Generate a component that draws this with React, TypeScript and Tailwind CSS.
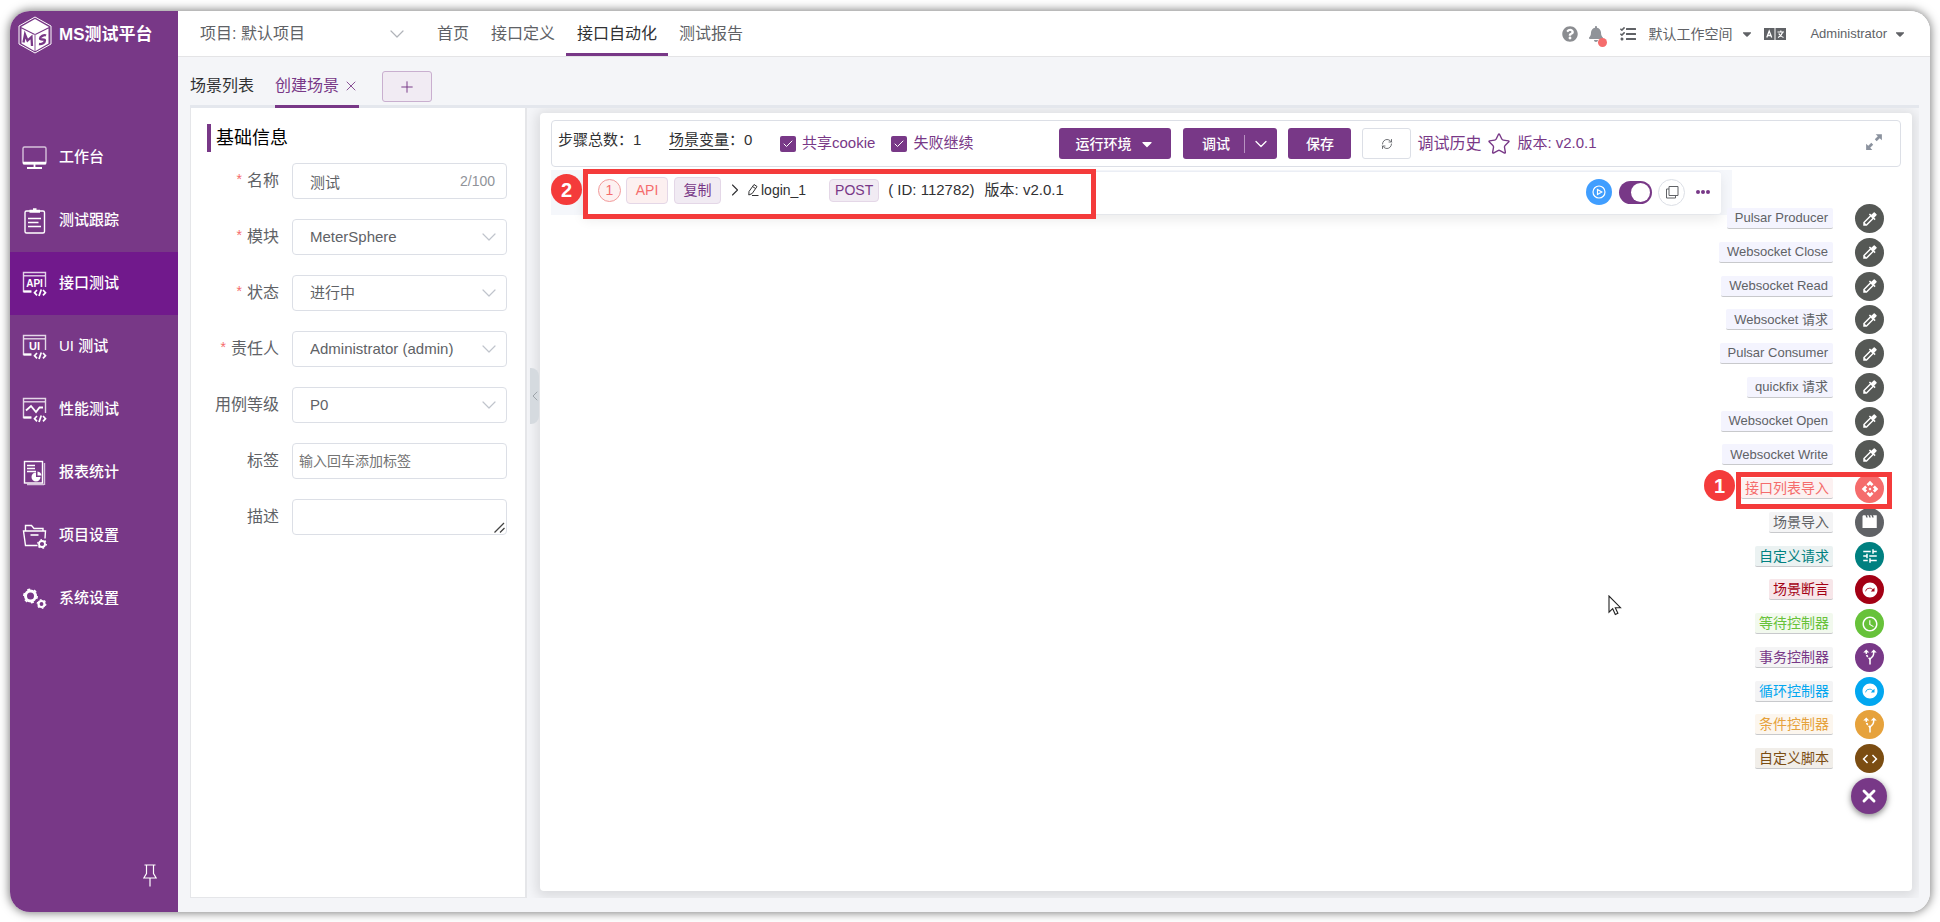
import * as React from "react"
import { clsx } from "clsx"
import { FaBell, FaCaretDown, FaQuestionCircle, FaTasks } from "react-icons/fa"
import {
  MdAccessTime,
  MdAltRoute,
  MdApi,
  MdCode,
  MdColorize,
  MdNextPlan,
  MdTune,
} from "react-icons/md"
import {
  Check,
  ChevronDown,
  ChevronLeft,
  ChevronRight,
  Plus,
  RefreshCw,
  Star,
  X,
} from "lucide-react"

function CodeMark() {
  return (
    <g strokeWidth="1.7">
      <path d="M15 19l-2.500 2.700 2.500 2.700" />
      <path d="M21 19l2.500 2.700-2.500 2.700" />
      <path d="M19.300 18.500l-2.300 6.500" />
    </g>
  )
}

function WindowFrame({ children }: { children: React.ReactNode }) {
  return (
    <>
      <path d="M9 20.500H1.500V1.500h22V16" strokeOpacity="0.8" />
      <path d="M1.500 20.500H9.500" strokeWidth="2.200" />
      <path d="M2 4.800h21" strokeOpacity="0.8" />
      {children}
      <CodeMark />
    </>
  )
}

function MenuSvg({ children }: { children: React.ReactNode }) {
  return (
    <svg
      viewBox="0 0 25 26"
      className="h-[26px] w-[25px] shrink-0"
      fill="none"
      stroke="currentColor"
      strokeWidth="1.4"
    >
      {children}
    </svg>
  )
}

const menus = [
  {
    label: "工作台",
    icon: (
      <MenuSvg>
        <rect x="1" y="2" width="23" height="17" rx="1.5" strokeOpacity="0.7" />
        <path d="M1 18h23" strokeWidth="2.6" />
        <path d="M12.5 19v3M5 23h15" strokeWidth="1.8" />
      </MenuSvg>
    ),
  },
  {
    label: "测试跟踪",
    icon: (
      <MenuSvg>
        <rect x="3" y="3" width="19.5" height="22" rx="1.5" />
        <path d="M7.5 3.2h10.500" strokeWidth="3" />
        <path d="M11 1.2h3.500" strokeWidth="2" />
        <path d="M6 10.5h13M6 14.5h10.500M6 18.500h13" />
      </MenuSvg>
    ),
  },
  {
    label: "接口测试",
    active: true,
    icon: (
      <MenuSvg>
        <WindowFrame>
          <text
            x="12.5"
            y="15.5"
            textAnchor="middle"
            fill="currentColor"
            stroke="none"
            fontSize="10"
            fontWeight="700"
          >
            API
          </text>
        </WindowFrame>
      </MenuSvg>
    ),
  },
  {
    label: "UI 测试",
    icon: (
      <MenuSvg>
        <WindowFrame>
          <text
            x="12.5"
            y="16"
            textAnchor="middle"
            fill="currentColor"
            stroke="none"
            fontSize="11"
            fontWeight="700"
          >
            UI
          </text>
        </WindowFrame>
      </MenuSvg>
    ),
  },
  {
    label: "性能测试",
    icon: (
      <MenuSvg>
        <WindowFrame>
          <path d="M4 13.5l5-4.500 5 6 3.500-4.500h3.500" strokeWidth="1.8" />
        </WindowFrame>
      </MenuSvg>
    ),
  },
  {
    label: "报表统计",
    icon: (
      <MenuSvg>
        <rect x="2.500" y="1.5" width="18" height="21.500" />
        <path d="M22.500 3v22M5 24.500h17" strokeOpacity="0.7" />
        <path d="M5 5.500h8M5 8.500h8M5 11.500h9" />
        <path
          d="M14 12.500v4.500h4.500a4.500 4.500 0 1 1-4.500-4.500z"
          fill="currentColor"
          stroke="none"
        />
        <path
          d="M15.500 11.500a4.500 4.500 0 0 1 4 4h-4z"
          fill="currentColor"
          stroke="none"
        />
      </MenuSvg>
    ),
  },
  {
    label: "项目设置",
    icon: (
      <MenuSvg>
        <path d="M3.500 8V2.500h6l2.500 3h9V8" />
        <path d="M15.500 22.500H3.500L1.500 8h22l-.5 7.500" />
        <path d="M8.500 12h8" strokeWidth="1.600" />
        <circle cx="20" cy="21" r="3" strokeWidth="1.800" />
        <circle
          cx="20"
          cy="21"
          r="4.200"
          strokeDasharray="1.600 2.800"
          strokeWidth="1.500"
        />
      </MenuSvg>
    ),
  },
  {
    label: "系统设置",
    icon: (
      <MenuSvg>
        <circle cx="8.500" cy="10" r="5" strokeWidth="3" />
        <circle
          cx="8.500"
          cy="10"
          r="6.700"
          strokeDasharray="3 4"
          strokeWidth="1.500"
        />
        <circle cx="19.500" cy="18" r="3" strokeWidth="2.200" />
        <circle
          cx="19.500"
          cy="18"
          r="4.300"
          strokeDasharray="1.800 2.700"
          strokeWidth="1.200"
        />
      </MenuSvg>
    ),
  },
]

const navLinks = ["首页", "接口定义", "接口自动化", "测试报告"]

function ClapIcon({ className }: { className?: string }) {
  return (
    <svg viewBox="0 0 24 24" className={className} fill="currentColor">
      <path d="M3 3h3l1 3h2L8 3h2l1 3h2l-1-3h2l1 3h2l-1-3h5v17H2V4z" />
    </svg>
  )
}

type Step = {
  label: string
  icon: React.ComponentType<{ className?: string }>
  circle: string
  tag: string
}

const steps: Step[] = [
  ...[
    "Pulsar Producer",
    "Websocket Close",
    "Websocket Read",
    "Websocket 请求",
    "Pulsar Consumer",
    "quickfix 请求",
    "Websocket Open",
    "Websocket Write",
  ].map((label) => ({
    label,
    icon: MdColorize,
    circle: "bg-[#555855]",
    tag: "bg-[#f4f4fe] pr-[5px] pl-2 text-[13px] text-[#606266]",
  })),
  {
    label: "接口列表导入",
    icon: MdApi,
    circle: "bg-[#f56c6c]",
    tag: "bg-[#fcf1f1] px-1 text-sm text-[#f56c6c]",
  },
  {
    label: "场景导入",
    icon: ClapIcon,
    circle: "bg-[#606266]",
    tag: "bg-[#f4f4f5] px-1 text-sm text-[#606266]",
  },
  {
    label: "自定义请求",
    icon: MdTune,
    circle: "bg-[#008080]",
    tag: "bg-[#ebf2f2] px-1 text-sm text-[#008080]",
  },
  {
    label: "场景断言",
    icon: MdNextPlan,
    circle: "bg-[#a30014]",
    tag: "bg-[#f7e6e9] px-1 text-sm text-[#a30014]",
  },
  {
    label: "等待控制器",
    icon: MdAccessTime,
    circle: "bg-[#67c23a]",
    tag: "bg-[#f2f9ee] px-1 text-sm text-[#67c23a]",
  },
  {
    label: "事务控制器",
    icon: MdAltRoute,
    circle: "bg-[#783887]",
    tag: "bg-[#f4f4f5] px-1 text-sm text-[#783887]",
  },
  {
    label: "循环控制器",
    icon: MdNextPlan,
    circle: "bg-[#02a7f0]",
    tag: "bg-[#f4f4f5] px-1 text-sm text-[#02a7f0]",
  },
  {
    label: "条件控制器",
    icon: MdAltRoute,
    circle: "bg-[#e6a23c]",
    tag: "bg-[#fcf6ee] px-1 text-sm text-[#e6a23c]",
  },
  {
    label: "自定义脚本",
    icon: MdCode,
    circle: "bg-[#7b4d12]",
    tag: "bg-[#f1eee9] px-1 text-sm text-[#7b4d12]",
  },
]

function Logo() {
  return (
    <svg viewBox="0 0 34 38" className="h-[38px] w-[34px] shrink-0">
      <path
        d="M17 1L33 10v18L17 37 1 28V10z"
        fill="none"
        stroke="#fff"
        strokeWidth="1"
      />
      <path d="M17 3L31 11 17 18 3 11z" fill="#fff" />
      <path d="M3.500 12.500L16.500 19v16L3.500 27.500z" fill="#fff" />
      <path d="M30.500 12.500L17.500 19v16l13-7.500z" fill="#fff" />
      <path d="M17 18.500v16.500" stroke="#c8aed0" strokeWidth="1.500" />
      <path
        d="M5.500 26.500l1.500-8 2.500 6 4-3.500.5 9"
        fill="none"
        stroke="#783887"
        strokeWidth="2.300"
      />
      <path
        d="M28 19.500c-2-1-6 1-6 3s5 0 5 2-3 4-6 3.500"
        fill="none"
        stroke="#783887"
        strokeWidth="2.300"
      />
    </svg>
  )
}

function Sidebar() {
  return (
    <aside className="flex w-[168px] shrink-0 flex-col bg-[#783887] text-white">
      <div className="flex items-center gap-[7px] pt-[5px] pl-2">
        <Logo />
        <span className="text-[17px] font-bold">MS测试平台</span>
      </div>
      <nav className="mt-[72px] flex flex-col">
        {menus.map((menu) => (
          <a
            key={menu.label}
            href="#"
            className={clsx(
              "flex h-[63px] items-center gap-3 pl-3 text-[15px] font-medium",
              menu.active && "bg-[#71198c]"
            )}
          >
            {menu.icon}
            {menu.label}
          </a>
        ))}
      </nav>
      <button
        aria-label="固定菜单"
        className="mt-auto mr-[21px] mb-[25px] self-end"
      >
        <svg
          viewBox="0 0 14 23"
          className="h-[23px] w-[14px]"
          fill="none"
          stroke="currentColor"
          strokeWidth="1.2"
        >
          <path d="M1.500 1h11M3.500 1v8.500L.8 14h12.400l-2.700-4.500V1M7 14v8.500" />
        </svg>
      </button>
    </aside>
  )
}

function Header() {
  return (
    <header className="flex h-[46px] shrink-0 items-center justify-between border-b border-[#e4e4e6] bg-white">
      <div className="flex items-center self-stretch">
        <button className="ml-[22px] flex w-[209px] items-center justify-between text-base text-[#606266]">
          项目: 默认项目
          <ChevronDown className="size-6 text-[#b0b3b9]" strokeWidth={1.2} />
        </button>
        <nav className="ml-[17px] flex self-stretch text-base text-[#606266]">
          {navLinks.map((link) => (
            <a
              key={link}
              href="#"
              className={clsx(
                "flex items-center border-b-3 px-[11px] pt-1",
                link === "接口自动化"
                  ? "border-[#783887] text-[#303133]"
                  : "border-transparent"
              )}
            >
              {link}
            </a>
          ))}
        </nav>
      </div>
      <div className="flex items-center pr-[23px] text-[#606266]">
        <button aria-label="帮助" className="text-[#8b8d91]">
          <FaQuestionCircle className="size-4" />
        </button>
        <button aria-label="通知" className="relative ml-2.5 text-[#909399]">
          <FaBell className="size-4" />
          <span className="absolute top-3 left-2.5 size-[9px] rounded-full bg-[#f56c6c]" />
        </button>
        <button className="ml-4 flex items-center text-sm">
          <FaTasks className="mr-3 size-4" />
          默认工作空间
          <FaCaretDown className="ml-2 size-3.5" />
        </button>
        <button aria-label="语言" className="ml-2.5">
          <svg viewBox="0 0 22 12" className="h-3 w-[22px]">
            <rect width="10.5" height="12" fill="#606266" />
            <rect x="11.5" width="10.5" height="12" fill="#606266" />
            <path
              d="M2.800 9.500L5.200 3l2.500 6.500M3.700 7.500h3"
              fill="none"
              stroke="#fff"
              strokeWidth="1.3"
            />
            <path
              d="M13.500 4h6.500M16.800 2.500V4M18.500 4.500c-.8 2.500-2.300 4-4.500 5M14.800 5.500c1 2 2.500 3.300 4.700 4"
              fill="none"
              stroke="#fff"
              strokeWidth="1.2"
            />
          </svg>
        </button>
        <button className="ml-6 flex items-center text-[13px]">
          Administrator
          <FaCaretDown className="ml-1.5 size-3.5" />
        </button>
      </div>
    </header>
  )
}

function Tabs() {
  return (
    <div className="flex h-[51px] shrink-0 border-b-3 border-[#e4e7ed] text-base text-[#303133]">
      <button className="mr-[21px] flex items-center pt-2.5">场景列表</button>
      <div className="-mb-[3px] flex items-center border-b-3 border-[#783887] pt-2.5 text-[#783887]">
        <button>创建场景</button>
        <button aria-label="关闭标签" className="ml-1">
          <X className="size-4" strokeWidth={1.3} />
        </button>
      </div>
      <button
        aria-label="新增标签"
        className="mt-3.5 ml-[23px] flex h-[31px] w-[50px] items-center justify-center rounded-[3px] border border-[#c9afcf] bg-[#f1ebf3] text-[#783887]"
      >
        <Plus className="size-[18px]" strokeWidth={1.3} />
      </button>
    </div>
  )
}

const fieldClass =
  "h-9 w-full rounded border border-[#dcdfe6] bg-white pl-[17px] text-[15px] text-[#606266] outline-none"

function Field(props: {
  id: string
  label: string
  required?: boolean
  children: React.ReactNode
}) {
  return (
    <div className="flex items-center gap-[13px]">
      <label
        htmlFor={props.id}
        className="flex w-[72px] shrink-0 justify-end gap-[5px] text-base whitespace-nowrap text-[#606266]"
      >
        {props.required && (
          <span className="text-sm leading-5 text-[#f56c6c]">*</span>
        )}
        {props.label}
      </label>
      <div className="relative flex flex-1">{props.children}</div>
    </div>
  )
}

function SelectBox({ id, value }: { id: string; value: string }) {
  return (
    <>
      <select id={id} className={clsx(fieldClass, "appearance-none")}>
        <option>{value}</option>
      </select>
      <ChevronDown
        className="pointer-events-none absolute top-1.5 right-1.5 size-6 text-[#c0c4cc]"
        strokeWidth={1.2}
      />
    </>
  )
}

function BasicInfo() {
  return (
    <section className="w-[337px] shrink-0 border-x border-r-2 border-b border-[#e5e6e9] bg-white pt-4 pr-[18px] pl-4">
      <h2 className="flex h-7 items-center border-l-4 border-[#783887] pl-[5px] text-lg text-black">
        基础信息
      </h2>
      <form className="mt-[11px] flex flex-col gap-5">
        <Field id="name" label="名称" required>
          <input
            id="name"
            defaultValue="测试"
            className={clsx(fieldClass, "pr-16")}
          />
          <span className="absolute top-[7px] right-3 text-sm leading-[22px] text-[#909399]">
            2/100
          </span>
        </Field>
        <Field id="module" label="模块" required>
          <SelectBox id="module" value="MeterSphere" />
        </Field>
        <Field id="status" label="状态" required>
          <SelectBox id="status" value="进行中" />
        </Field>
        <Field id="owner" label="责任人" required>
          <SelectBox id="owner" value="Administrator (admin)" />
        </Field>
        <Field id="level" label="用例等级">
          <SelectBox id="level" value="P0" />
        </Field>
        <Field id="tags" label="标签">
          <input
            id="tags"
            placeholder="输入回车添加标签"
            className="h-9 w-full rounded border border-[#dcdfe6] pl-1.5 text-sm outline-none placeholder:text-[#757575]"
          />
        </Field>
        <Field id="desc" label="描述">
          <textarea
            id="desc"
            rows={1}
            className="h-9 w-full resize-none rounded border border-[#dcdfe6] px-4 py-1.5 text-sm outline-none"
          />
          <svg
            viewBox="0 0 11 11"
            className="pointer-events-none absolute right-0.5 bottom-0.5 size-[11px]"
            stroke="#444"
            strokeWidth="1.3"
          >
            <path d="M.5 10.500L10 1M6 10.500L10.500 6" />
          </svg>
        </Field>
      </form>
    </section>
  )
}

function CheckItem({ id, label }: { id: string; label: string }) {
  return (
    <div className="flex items-center gap-1.5">
      <span className="relative flex size-4">
        <input
          id={id}
          type="checkbox"
          defaultChecked
          className="size-4 appearance-none rounded-[2px] bg-[#783887]"
        />
        <Check
          className="pointer-events-none absolute top-0.5 left-0.5 size-3 text-white"
          strokeWidth={2}
        />
      </span>
      <label htmlFor={id} className="text-[15px] text-[#783887]">
        {label}
      </label>
    </div>
  )
}

const primaryButton =
  "flex h-[31px] items-center rounded-[3px] bg-[#783887] text-sm font-medium text-white"

function Toolbar() {
  return (
    <div className="flex h-[47px] items-center rounded border border-[#dcdfe6] pr-[17px] pl-1.5 text-[15px] whitespace-nowrap text-[#303133]">
      <span className="w-[111px] pb-1.5">步骤总数：1</span>
      <span className="w-[111px] pb-1.5">
        <a href="#" className="border-b border-[#303133] pb-px">
          场景变量
        </a>
        ：0
      </span>
      <div className="flex items-center gap-4">
        <CheckItem id="cookie" label="共享cookie" />
        <CheckItem id="continue" label="失败继续" />
      </div>
      <button
        className={clsx(primaryButton, "ml-[86px] w-[112px] justify-center")}
      >
        运行环境
        <FaCaretDown className="ml-2 size-4" />
      </button>
      <div className={clsx(primaryButton, "ml-3 w-[94px]")}>
        <button className="flex-1 pl-1">调试</button>
        <button
          aria-label="更多调试"
          className="flex h-[18px] w-[33px] items-center justify-center border-l border-[#b892c1]"
        >
          <ChevronDown className="size-5" strokeWidth={1.5} />
        </button>
      </div>
      <button
        className={clsx(primaryButton, "ml-[11px] w-[63px] justify-center")}
      >
        保存
      </button>
      <button
        aria-label="刷新"
        className="ml-[11px] flex h-[31px] w-[49px] items-center justify-center rounded-[3px] border border-[#dcdfe6] text-[#606266]"
      >
        <RefreshCw className="size-3" strokeWidth={1.8} />
      </button>
      <a href="#" className="ml-1.5 text-base text-[#783887]">
        调试历史
      </a>
      <button aria-label="收藏" className="ml-1.5 text-[#783887]">
        <Star className="size-6" strokeWidth={1.4} />
      </button>
      <a href="#" className="ml-1.5 text-[15px] text-[#783887]">
        版本: v2.0.1
      </a>
      <button aria-label="全屏" className="ml-auto text-[#8b929e]">
        <svg viewBox="0 0 16 16" className="mb-1 size-[18px]" fill="currentColor">
          <path d="M9.500 1H15v5.500l-1.900-1.900-2.700 2.700-1.700-1.700 2.700-2.700zM6.500 15H1V9.500l1.900 1.900 2.700-2.700 1.700 1.700-2.700 2.700z" />
        </svg>
      </button>
    </div>
  )
}

function Marker({ value, className }: { value: string; className: string }) {
  return (
    <span
      className={clsx(
        "absolute z-20 flex size-[31px] items-center justify-center rounded-full bg-[#f43b3b] text-xl font-bold text-white",
        className
      )}
    >
      {value}
    </span>
  )
}

function StepRow() {
  return (
    <div className="relative mt-[3px] mr-[169px] h-[45px] bg-[#f5f7fb] pt-px pr-[11px] pl-8">
      <div className="flex h-[43px] items-center rounded-[3px] border-t border-[#ebeef5] bg-white pb-1.5 pl-[15px] text-sm whitespace-nowrap text-[#303133] shadow-[0_6px_12px_rgba(0,0,0,0.08)]">
        <span className="flex size-[23px] items-center justify-center rounded-full border border-[#f29a9a] bg-[#fdf1f1] text-[#f56c6c]">
          1
        </span>
        <span className="ml-[5px] flex h-[27px] w-[42px] items-center justify-center rounded border border-[#e4d7e7] bg-[#fcf0f0] text-[#f56c6c]">
          API
        </span>
        <button className="ml-1.5 flex h-[27px] w-[47px] items-center justify-center rounded border border-[#e4d7e7] bg-[#f1ebf3] text-[#783887]">
          复制
        </button>
        <ChevronRight className="ml-1 size-5" strokeWidth={1.3} />
        <svg
          viewBox="0 0 12 14"
          className="ml-0.5 h-3.5 w-3"
          fill="none"
          stroke="currentColor"
          strokeWidth="1"
        >
          <path d="M2 8.500L7 1.500l3 2L5.200 10.500 1.800 12zM5.500 3.500l3 2M5 12.500h6.500" />
        </svg>
        <span className="ml-0.5">login_1</span>
        <span className="ml-[23px] flex h-[23px] w-[50px] items-center justify-center rounded border border-[#e4d7e7] bg-[#f1ebf3] text-[#783887]">
          POST
        </span>
        <span className="ml-[9px] text-[15px]">( ID: 112782)</span>
        <span className="ml-2.5 text-[15px]">版本: v2.0.1</span>
        <div className="mt-1 mr-[11px] ml-auto flex items-center">
          <button
            aria-label="执行"
            className="flex size-[26px] items-center justify-center rounded-full bg-[#409eff] text-white"
          >
            <svg
              viewBox="0 0 14 14"
              className="size-3.5"
              fill="none"
              stroke="currentColor"
              strokeWidth="1.2"
            >
              <circle cx="7" cy="7" r="6" />
              <path d="M5.500 4.500v5L9.800 7z" />
            </svg>
          </button>
          <span className="relative ml-[7px] flex">
            <input
              type="checkbox"
              role="switch"
              aria-label="启用步骤"
              defaultChecked
              className="h-[23px] w-[33px] appearance-none rounded-full bg-[#783887]"
            />
            <span className="pointer-events-none absolute top-0.5 right-0.5 size-[19px] rounded-full bg-white" />
          </span>
          <button
            aria-label="复制步骤"
            className="ml-1.5 flex size-[27px] items-center justify-center rounded-full border border-[#dcdfe6] text-[#606266]"
          >
            <svg
              viewBox="0 0 14 14"
              className="size-3.5"
              fill="none"
              stroke="currentColor"
              strokeWidth="1"
            >
              <path d="M4 1.500h9v9H4zM4 4H1.500v9h9v-2.500" />
            </svg>
          </button>
          <button
            aria-label="更多"
            className="ml-[11px] flex h-4 items-center gap-px"
          >
            <span className="size-[4px] rounded-full bg-[#783887]" />
            <span className="size-[4px] rounded-full bg-[#783887]" />
            <span className="size-[4px] rounded-full bg-[#783887]" />
          </button>
        </div>
      </div>
      <Marker value="2" className="top-1 left-0" />
      <span className="pointer-events-none absolute -top-px left-8 z-10 h-[50px] w-[513px] border-[5px] border-[#f43b3b]" />
    </div>
  )
}

function StepFab() {
  return (
    <div className="absolute top-[91px] right-[25px] flex flex-col items-end gap-[5px]">
      <ul className="flex h-[569px] flex-col justify-between pr-[3px]">
        {steps.map((step) => {
          const Icon = step.icon
          const isMarked = step.label === "接口列表导入"
          return (
            <li key={step.label} className="relative flex justify-end">
              <button className="flex items-center gap-[22px]">
                <span
                  className={clsx(
                    "flex h-[21px] items-center rounded-[2px] border-b border-[#c8c9cc] whitespace-nowrap",
                    step.tag
                  )}
                >
                  {step.label}
                </span>
                <span
                  className={clsx(
                    "flex size-[29px] items-center justify-center rounded-full text-white",
                    step.circle
                  )}
                >
                  <Icon className="size-[18px]" />
                </span>
              </button>
              {isMarked && (
                <>
                  <Marker value="1" className="-top-1 right-[149px]" />
                  <span className="pointer-events-none absolute -top-0.5 -right-2 z-10 h-[37px] w-[156px] border-[5px] border-[#f43b3b]" />
                </>
              )}
            </li>
          )
        })}
      </ul>
      <button
        aria-label="收起"
        className="flex size-9 items-center justify-center rounded-full bg-[#783887] text-white shadow-[0_2px_6px_rgba(0,0,0,0.5)]"
      >
        <X className="size-5" strokeWidth={3.5} />
      </button>
    </div>
  )
}

function ScenarioPanel() {
  return (
    <section className="relative flex flex-1 overflow-hidden pt-[5px] pr-[7px] pb-[7px] pl-[13px]">
      <button
        aria-label="收起基础信息"
        className="absolute top-[260px] left-[3px] z-10 flex h-14 w-[9px] items-center justify-center rounded-r-lg bg-[#d5dadf] text-[#8f959c]"
      >
        <ChevronLeft className="size-4 shrink-0" strokeWidth={1.2} />
      </button>
      <div className="relative flex-1 rounded bg-white px-[11px] pt-[7px] shadow-[0_2px_12px_4px_rgba(0,0,0,0.1)]">
        <Toolbar />
        <StepRow />
        <StepFab />
      </div>
    </section>
  )
}

function Pointer() {
  return (
    <svg
      viewBox="0 0 14 21"
      className="absolute top-[595px] right-[318px] h-[21px] w-[14px]"
    >
      <path
        d="M1 1v16.200l3.700-3.500 2.600 5.800 2.600-1.200-2.600-5.600h5.200z"
        fill="#fff"
        stroke="#222"
        strokeWidth="1.1"
      />
    </svg>
  )
}

export default function App() {
  return (
    <div className="relative flex min-h-screen bg-white px-2.5 pt-[11px] pb-2.5 font-['Liberation_Sans','Noto_Sans_CJK_SC',sans-serif]">
      <div className="flex flex-1 overflow-hidden rounded-[20px] shadow-[0_0_10px_1px_rgba(0,0,0,0.5)]">
        <Sidebar />
        <div className="flex min-w-0 flex-1 flex-col bg-[#f4f5f8]">
          <Header />
          <main className="flex flex-1 flex-col pr-[11px] pb-3.5 pl-3">
            <Tabs />
            <div className="flex flex-1">
              <BasicInfo />
              <ScenarioPanel />
            </div>
          </main>
        </div>
      </div>
      <Pointer />
    </div>
  )
}
